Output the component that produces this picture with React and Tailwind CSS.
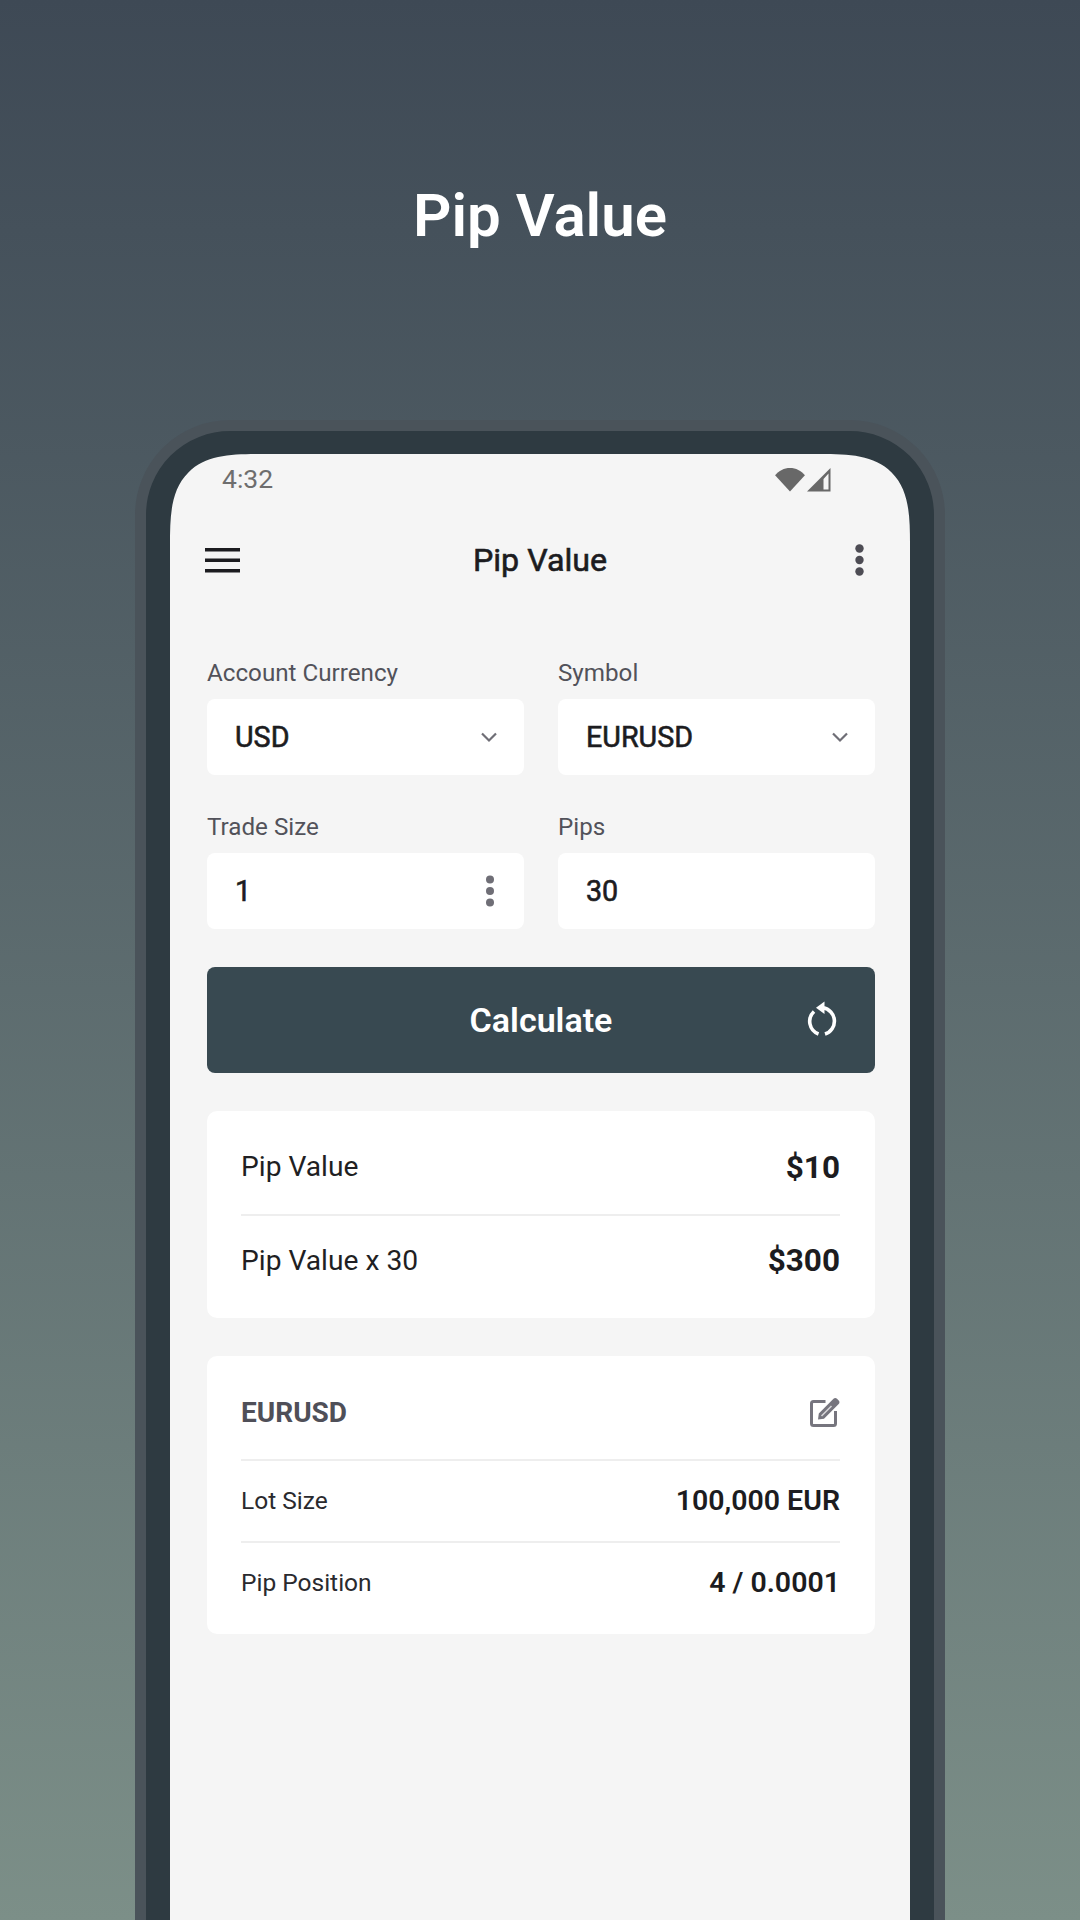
import React from "react";

const Chevron = () => (
  <svg width="18" height="12" viewBox="0 0 18 12" fill="none" className="shrink-0">
    <path d="M2 2.5 L9 9.5 L16 2.5" stroke="#6f6e76" strokeWidth="2.2" />
  </svg>
);

const Dots = ({ color }) => (
  <svg width="10" height="32" viewBox="0 0 10 32" fill={color} className="shrink-0 mr-[3px]">
    <circle cx="5" cy="4.5" r="4" />
    <circle cx="5" cy="16" r="4" />
    <circle cx="5" cy="27.5" r="4" />
  </svg>
);

const Field = ({ label, value, icon }) => (
  <div className="flex flex-col">
    <div className="h-[34px] mb-[9px] text-[24.2px] leading-[34px] text-[#52525a]">{label}</div>
    <div className="h-[76px] bg-white rounded-[8px] pl-[28px] pr-[26px] flex items-center justify-between">
      <span className="pt-[2px] text-[28.7px] text-[#1c1c20] [-webkit-text-stroke:0.6px_#1c1c20]">{value}</span>
      {icon}
    </div>
  </div>
);

const Divider = () => <div className="h-[2px] bg-[#eeeeee]" />;

export default function App() {
  return (
    <div
      className="w-[1080px] h-[1920px] overflow-hidden flex flex-col items-center bg-gradient-to-b from-[#3e4955] to-[#7c8f88]"
      style={{ fontFamily: "Roboto, sans-serif" }}
    >
      <div className="h-[420px] w-full shrink-0 flex justify-center pt-[175px]">
        <h1 className="text-[60px] leading-[82px] font-semibold text-white h-[82px]">Pip Value</h1>
      </div>

      <div className="w-[810px] shrink-0 h-[1600px] rounded-t-[95px] bg-[#2e3a41] border-[11px] border-[#4a535a] pt-[23px] px-[24px]">
        <div className="h-full rounded-t-[90px] [corner-shape:superellipse(1.6)] bg-[#f5f5f5] flex flex-col">
          <div className="h-[50px] flex items-center justify-between pl-[52px] pr-[79px] shrink-0">
            <span className="text-[26.5px] text-[#6e6e6e]">4:32</span>
            <div className="flex items-end gap-[1px]">
              <svg width="32" height="25" viewBox="0 0 30 24" fill="#686868" preserveAspectRatio="none">
                <path d="M15 23.5 L1 8 C4.5 3.5 9.5 1 15 1 C20.5 1 25.5 3.5 29 8 Z" />
              </svg>
              <svg width="24" height="24" viewBox="0 0 24 24" fill="#686868">
                <path fillRule="evenodd" d="M23.5 0 V23.5 H0 Z M21.5 5.5 L16.5 11 V21.5 H21.5 Z" />
              </svg>
            </div>
          </div>

          <div className="h-[112px] flex items-center px-[35px] shrink-0">
            <div className="flex-1 flex">
              <svg width="35" height="25" viewBox="0 0 35 25" fill="#1c1c20">
                <rect x="0" y="0" width="35" height="3.5" />
                <rect x="0" y="10.5" width="35" height="3.5" />
                <rect x="0" y="21" width="35" height="3.5" />
              </svg>
            </div>
            <span className="text-[32.2px] text-[#1c1c20] [-webkit-text-stroke:0.6px_#1c1c20]">Pip Value</span>
            <div className="flex-1 flex justify-end">
              <svg width="11" height="32" viewBox="0 0 11 32" fill="#4d4c54" className="mr-[10px]">
                <circle cx="5.5" cy="4.5" r="4.2" />
                <circle cx="5.5" cy="16" r="4.2" />
                <circle cx="5.5" cy="27.5" r="4.2" />
              </svg>
            </div>
          </div>

          <div className="pl-[37px] pr-[35px] pt-[40px] flex flex-col">
            <div className="grid grid-cols-2 gap-x-[34px] gap-y-[35px]">
              <Field label="Account Currency" value="USD" icon={<Chevron />} />
              <Field label="Symbol" value="EURUSD" icon={<Chevron />} />
              <Field label="Trade Size" value="1" icon={<Dots color="#6f6e76" />} />
              <Field label="Pips" value="30" />
            </div>

            <div className="mt-[38px] h-[106px] bg-[#384951] rounded-[8px] relative flex items-center justify-center">
              <span className="text-[34px] font-semibold text-white">Calculate</span>
              <svg
                width="32"
                height="36"
                viewBox="0 0 32 36"
                fill="none"
                className="absolute right-[37px] top-[34px]"
              >
                <path d="M8 10.5 A13.5 13.5 0 0 0 12.5 33" stroke="white" strokeWidth="3.6" />
                <path d="M19 33 A13.5 13.5 0 0 0 17 6.8" stroke="white" strokeWidth="3.6" />
                <path d="M18.5 0.5 V13 L10 6.8 Z" fill="white" />
              </svg>
            </div>

            <div className="mt-[38px] bg-white rounded-[10px] pl-[34px] pr-[35px] pt-[10px] pb-[12px]">
              <div className="h-[93px] flex items-center justify-between">
                <span className="text-[28.2px] text-[#1f1f23]">Pip Value</span>
                <span className="text-[31.5px] font-bold text-[#1c1c20]">$10</span>
              </div>
              <Divider />
              <div className="h-[90px] flex items-center justify-between">
                <span className="text-[28.2px] text-[#1f1f23]">Pip Value x 30</span>
                <span className="text-[31.5px] font-bold text-[#1c1c20]">$300</span>
              </div>
            </div>

            <div className="mt-[38px] bg-white rounded-[10px] pl-[34px] pr-[35px] pt-[10px] pb-[11px]">
              <div className="h-[93px] flex items-center justify-between">
                <span className="text-[28px] font-bold text-[#4f4f58]">EURUSD</span>
                <svg width="30" height="30" viewBox="0 0 30 30" fill="none" className="mb-[2px]">
                  <path
                    d="M15.5 4.5 H3.5 A2 2 0 0 0 1.5 6.5 V26.5 A2 2 0 0 0 3.5 28.5 H23.5 A2 2 0 0 0 25.5 26.5 V14"
                    stroke="#76757e"
                    strokeWidth="3"
                  />
                  <path
                    d="M8 22.5 L8.8 16.5 L23.5 1.8 C24.5 0.8 26 0.8 27 1.8 L28.7 3.5 C29.7 4.5 29.7 6 28.7 7 L14 21.7 Z"
                    fill="#76757e"
                  />
                  <path d="M11.5 19 L21.5 9" stroke="white" strokeWidth="1.6" strokeOpacity="0.7" />
                </svg>
              </div>
              <Divider />
              <div className="h-[80px] flex items-center justify-between">
                <span className="text-[24.5px] text-[#2a2a2e]">Lot Size</span>
                <span className="text-[28.5px] font-semibold text-[#1c1c20]">100,000 EUR</span>
              </div>
              <Divider />
              <div className="h-[80px] flex items-center justify-between">
                <span className="text-[24.5px] text-[#2a2a2e]">Pip Position</span>
                <span className="text-[28.5px] font-semibold text-[#1c1c20]">4 / 0.0001</span>
              </div>
            </div>
          </div>
        </div>
      </div>
    </div>
  );
}
